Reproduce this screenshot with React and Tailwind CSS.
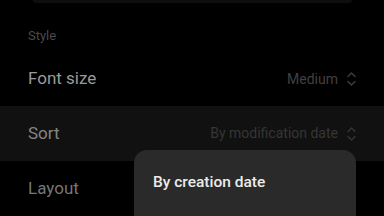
export default function App() {
  const Chev = () => (
    <svg width="9" height="16" viewBox="0 0 9 16" fill="none" stroke="currentColor" strokeWidth="1.3" strokeLinecap="round" strokeLinejoin="round" className="ml-[9px]">
      <path d="M1 5.5 L4.5 2 L8 5.5" />
      <path d="M1 10.5 L4.5 14 L8 10.5" />
    </svg>
  );
  return (
    <div className="relative w-[384px] h-[216px] bg-black overflow-hidden" style={{ fontFamily: "Roboto, 'Noto Sans', sans-serif" }}>
      <div className="ml-[33px] w-[319px] h-[3px] bg-[#0e0e0e] rounded-b-[4px]" />
      <div className="h-[25px]" />
      <div className="px-[28px] h-[16px] flex items-center text-[13px] text-[#4a4a4a]">Style</div>
      <div className="h-[8px]" />
      <div className="h-[54px] pl-[28px] pr-[28px] flex items-center justify-between">
        <span className="text-[17px] text-[#9a9a9a]">Font size</span>
        <span className="flex items-center text-[14px] text-[#404040]">Medium<Chev /></span>
      </div>
      <div className="h-[55px] pl-[28px] pr-[28px] flex items-center justify-between bg-[#111111]">
        <span className="text-[17px] text-[#858585]">Sort</span>
        <span className="flex items-center text-[14px] text-[#363636]">By modification date<Chev /></span>
      </div>
      <div className="h-[55px] px-[28px] flex items-center">
        <span className="text-[17px] text-[#767676]">Layout</span>
      </div>
      <div className="absolute left-[134px] top-[150px] w-[222px] h-[90px] rounded-[13px] bg-[#2a2a2a] pl-[19px] pt-[23px]">
        <div className="text-[15.5px] font-medium text-[#ececec] leading-[18px]">By creation date</div>
      </div>
    </div>
  );
}
